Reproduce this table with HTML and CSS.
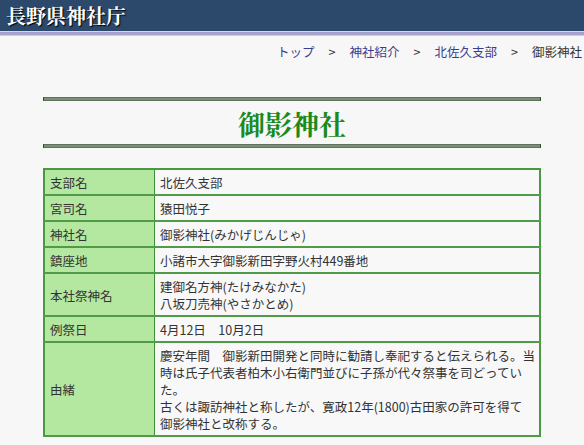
FILE: index.html
```html
<!DOCTYPE html>
<html lang="ja">
<head>
<meta charset="utf-8">
<title>御影神社 | 長野県神社庁</title>
<link rel="stylesheet" href="styles.css">
</head>
<body>
<header class="site-header">
  <div class="site-title">長野県神社庁</div>
</header>
<div class="stripe"></div>
<nav class="breadcrumb">
  <a href="#">トップ</a><span class="sep">&gt;</span><a href="#">神社紹介</a><span class="sep">&gt;</span><a href="#">北佐久支部</a><span class="sep">&gt;</span><span class="current">御影神社</span>
</nav>
<main class="content">
  <div class="rule"></div>
  <h1 class="shrine-name">御影神社</h1>
  <div class="rule"></div>
  <table class="info">
    <tr><th>支部名</th><td>北佐久支部</td></tr>
    <tr><th>宮司名</th><td>猿田悦子</td></tr>
    <tr><th>神社名</th><td>御影神社(みかげじんじゃ)</td></tr>
    <tr><th>鎮座地</th><td>小諸市大字御影新田字野火村449番地</td></tr>
    <tr><th>本社祭神名</th><td>建御名方神(たけみなかた)<br>八坂刀売神(やさかとめ)</td></tr>
    <tr><th>例祭日</th><td>4月12日　10月2日</td></tr>
    <tr><th>由緒</th><td>慶安年間　御影新田開発と同時に勧請し奉祀すると伝えられる。当時は氏子代表者柏木小右衛門並びに子孫が代々祭事を司どっていた。<br>古くは諏訪神社と称したが、寛政12年(1800)古田家の許可を得て<br>御影神社と改称する。</td></tr>
  </table>
</main>
</body>
</html>
```

FILE: styles.css
```css
html, body {
  margin: 0;
  padding: 0;
}
body {
  background: #f7f7f7;
  color: #333;
  font-family: "Noto Sans CJK JP", "Noto Sans", sans-serif;
  font-size: 12.5px;
}
.site-header {
  height: 31px;
  background: #2c486a;
  display: flex;
  align-items: center;
  padding-left: 6px;
}
.site-title {
  color: #fff;
  font-family: "Noto Serif CJK JP", "Noto Sans CJK JP", serif;
  font-weight: bold;
  font-size: 20px;
  line-height: 1;
  text-shadow: 1px 1px 1px #000;
}
.stripe {
  height: 5px;
  background: linear-gradient(#d6d6ea 0, #d6d6ea 20%, #a39fcc 20%, #a9a5d0 70%, #dcdcec 100%);
}
.breadcrumb {
  text-align: right;
  padding: 7px 2px 0 0;
  line-height: 17px;
  height: 20px;
}
.breadcrumb a {
  color: #3a3d8e;
  text-decoration: none;
}
.breadcrumb .sep {
  padding: 0 14px;
  color: #333;
}
.breadcrumb .current {
  color: #333;
}
.content {
  margin: 0 43px;
  padding-top: 34px;
}
.rule {
  height: 2px;
  background: #7d8f79;
  border: 1px solid #5e735b;
  border-left-color: #2e4a2e;
  border-right-color: #2e4a2e;
}
.shrine-name {
  margin: 0;
  padding: 9px 0 7px;
  text-align: center;
  color: #1b8a1b;
  font-family: "Noto Serif CJK JP", "Noto Sans CJK JP", serif;
  font-size: 27px;
  line-height: 27px;
  font-weight: bold;
}
.info {
  margin-top: 20px;
  width: 100%;
  border-collapse: collapse;
  border: 2px solid #4a9842;
}
.info th, .info td {
  border: 1px solid #3f8e3a;
  border-bottom: 2px solid #4f9b47;
  padding: 4px 4px 3px 5px;
  line-height: 17px;
  text-align: left;
  font-weight: normal;
  vertical-align: middle;
}
.info th {
  width: 100px;
  background: #b4e7a0;
}
.info td {
  background: #f8f8f8;
}
```
